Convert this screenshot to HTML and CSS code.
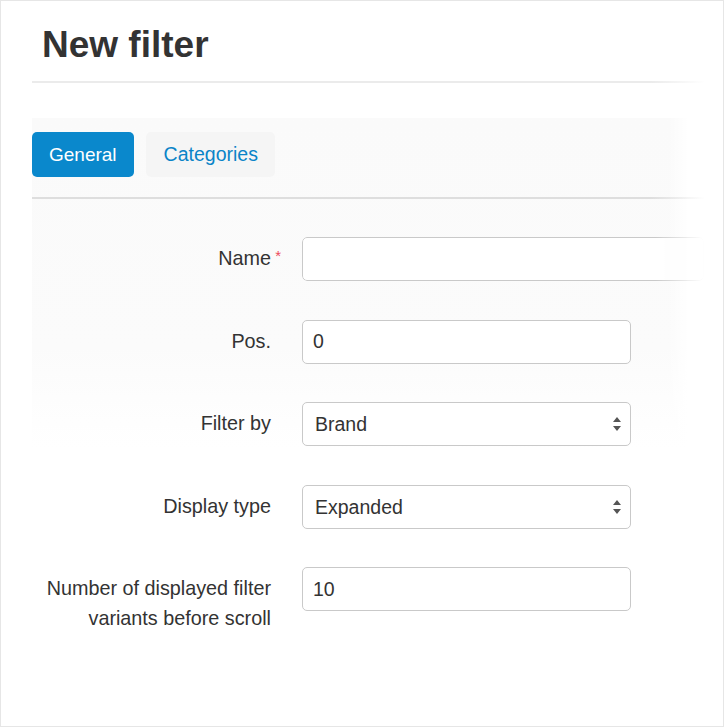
FILE: index.html
```html
<!DOCTYPE html>
<html>
  <head>
    <title>New filter</title>
    <link rel="stylesheet" href="styles.css">
  </head>
  <body>
    <div class="page">
      <h1 class="page-title">New filter</h1>

      <div class="panel">
        <div class="tabs">
          <a class="tab tab-active" href="#general">General</a>
          <a class="tab" href="#categories">Categories</a>
        </div>

        <form class="filter-form">
          <div class="form-row">
            <label class="form-label" for="name"><span class="required">Name</span></label>
            <input class="form-input input-wide" type="text" id="name" />
          </div>
          <div class="form-row">
            <label class="form-label" for="position">Pos.</label>
            <input class="form-input" type="text" id="position" value="0" />
          </div>
          <div class="form-row">
            <label class="form-label" for="filterBy">Filter by</label>
            <div class="select-wrap">
              <select class="form-input form-select" id="filterBy">
                <option>Brand</option>
              </select>
              <svg class="select-arrows" width="8" height="14" viewBox="0 0 8 14">
                <path d="M4 0 L8 5 L0 5 Z M0 9 L8 9 L4 14 Z" fill="#555" />
              </svg>
            </div>
          </div>
          <div class="form-row">
            <label class="form-label" for="displayType">Display type</label>
            <div class="select-wrap">
              <select class="form-input form-select" id="displayType">
                <option>Expanded</option>
              </select>
              <svg class="select-arrows" width="8" height="14" viewBox="0 0 8 14">
                <path d="M4 0 L8 5 L0 5 Z M0 9 L8 9 L4 14 Z" fill="#555" />
              </svg>
            </div>
          </div>
          <div class="form-row">
            <label class="form-label" for="variants">Number of displayed filter variants before scroll</label>
            <input class="form-input" type="text" id="variants" value="10" />
          </div>
        </form>
      </div>
    </div>
  </body>
</html>
```

FILE: styles.css
```css
html,
body {
  margin: 0;
  background: #fff;
}

body {
  font-family: "Liberation Sans", Arial, sans-serif;
  color: #333;
}

.page {
  width: 724px;
  height: 727px;
  box-sizing: border-box;
  border: 1px solid #e6e6e6;
  padding: 0 19px 0 31px;
  overflow: hidden;
}

.page-title {
  margin: 0;
  padding: 22px 0 14px 10px;
  font-size: 37px;
  line-height: 44px;
  font-weight: bold;
  color: #333;
  border-bottom: 2px solid #ebebeb;
  border-image: linear-gradient(to right, #ebebeb 92%, rgba(235, 235, 235, 0)) 1;
}

.panel {
  margin-top: 35px;
  background:
    linear-gradient(to right, rgba(255, 255, 255, 0) 636px, #fff 656px),
    linear-gradient(to bottom, #fafafa 0, #fbfbfb 230px, #fff 330px);
}

/* Tabs */
.tabs {
  display: flex;
  gap: 12px;
  padding: 14px 0 20px;
  border-bottom: 2px solid #dedede;
  border-image: linear-gradient(to right, #dedede 92%, rgba(222, 222, 222, 0)) 1;
}

.tab {
  display: block;
  height: 45px;
  line-height: 45px;
  padding: 0 17px 0 18px;
  border-radius: 5px;
  font-size: 19.5px;
  color: #0a84c8;
  background: #f5f5f5;
  text-decoration: none;
}

.tab-active {
  background: #0a88cc;
  color: #fff;
  padding: 0 17px 0 17px;
  font-size: 19px;
}

/* Form */
.filter-form {
  padding-top: 38px;
  display: flex;
  flex-direction: column;
  gap: 38.5px;
}

.form-row {
  display: grid;
  grid-template-columns: 239px 329px;
  column-gap: 31px;
  align-items: start;
}

.form-label {
  padding-top: 6px;
  font-size: 19.8px;
  line-height: 30px;
  text-align: right;
  color: #333;
}

.required {
  position: relative;
}

.required::after {
  content: "*";
  position: absolute;
  right: -10px;
  top: -6px;
  font-size: 15px;
  color: #ec4a5c;
}

.form-input {
  display: block;
  width: 100%;
  height: 44px;
  box-sizing: border-box;
  margin: 0;
  padding: 0 10px;
  font-family: "Liberation Sans", Arial, sans-serif;
  font-size: 19.5px;
  color: #333;
  background: #fff;
  border: 1px solid #c9c9c9;
  border-radius: 5px;
  outline: none;
}

.input-wide {
  width: 402px;
  -webkit-mask-image: linear-gradient(to right, #000 88%, transparent);
  mask-image: linear-gradient(to right, #000 88%, transparent);
}

.select-wrap {
  position: relative;
}

.form-select {
  -webkit-appearance: none;
  appearance: none;
  padding-left: 12px;
}

.select-arrows {
  position: absolute;
  right: 10px;
  top: 15px;
  pointer-events: none;
}
```
